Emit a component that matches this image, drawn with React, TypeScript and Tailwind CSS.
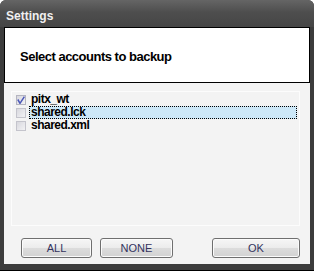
import React from "react";

const Btn = ({ label, className }: { label: string; className: string }) => (
  <button
    className={`h-[20px] rounded-[3px] border border-[#6f6f6f] bg-[linear-gradient(#f6f6f6_0%,#ececec_48%,#dcdcdc_52%,#d2d2d2_100%)] text-[11px] leading-[18px] text-[#33335e] shadow-[inset_0_0_0_1px_#fbfbfb] ${className}`}
    style={{ fontFamily: "'Liberation Sans', Arial, sans-serif" }}
  >
    {label}
  </button>
);

export default function App() {
  return (
    <div className="w-[314px] h-[271px] bg-white">
      <div
        className="w-[314px] h-[271px] bg-[#3c3c3c] rounded-t-[6px] flex flex-col overflow-hidden"
        style={{ fontFamily: "'Liberation Sans', Arial, sans-serif" }}
      >
        <div className="h-[27px] shrink-0 bg-[linear-gradient(#656565,#4e4e4e_45%,#454545_100%)] flex items-center pl-[6px] pt-[4px]">
          <span className="text-[#f0f0f0] font-bold text-[12px]">Settings</span>
        </div>
        <div className="h-[237px] mx-[4px] bg-[#f3f3f3] flex flex-col shrink-0">
          <div className="h-[56px] bg-white border border-black flex items-center pl-[15px] pt-[4px]">
            <span className="text-black font-bold text-[13px] tracking-[-0.5px]">Select accounts to backup</span>
          </div>
          <div className="ml-[7px] mr-[10px] mt-[8px] h-[135px] border border-[#fcfcfc] pt-[1px] pl-[4px] pr-[2px] flex flex-col text-[12px] font-bold text-black tracking-[-0.5px]">
            <div className="flex items-center h-[13px]">
              <span className="w-[10px] h-[10px] border border-[#b4b4c0] bg-[linear-gradient(135deg,#d8d8de,#f2f2f4)] flex items-center justify-center mr-[5px] shrink-0">
                <svg width="8" height="8" viewBox="0 0 8 8"><path d="M0.8 3.5 L3 7.3 L7.4 0.6" stroke="#4b57b8" strokeWidth="1.5" fill="none" /></svg>
              </span>
              <span className="leading-[13px]">pitx_wt</span>
            </div>
            <div className="flex items-center h-[13px]">
              <span className="w-[10px] h-[10px] border border-[#c4c4cc] bg-[linear-gradient(135deg,#d8d8de,#f2f2f4)] mr-[3px] shrink-0" />
              <span className="flex-1 h-[13px] leading-[11px] bg-[#cde8f8] border border-dotted border-black pl-[1px]">shared.lck</span>
            </div>
            <div className="flex items-center h-[13px]">
              <span className="w-[10px] h-[10px] border border-[#c4c4cc] bg-[linear-gradient(135deg,#d8d8de,#f2f2f4)] mr-[5px] shrink-0" />
              <span className="leading-[13px]">shared.xml</span>
            </div>
          </div>
          <div className="flex items-center pl-[17px] pr-[10px] mt-[12px]">
            <Btn label="ALL" className="w-[71px]" />
            <Btn label="NONE" className="w-[73px] ml-[8px]" />
            <Btn label="OK" className="w-[88px] ml-auto" />
          </div>
        </div>
        <div className="flex-1 border-b border-black" />
      </div>
    </div>
  );
}
